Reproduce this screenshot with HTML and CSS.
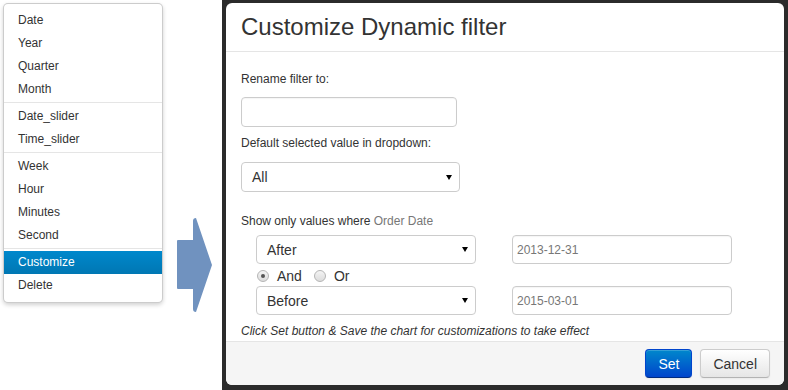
FILE: index.html
```html
<!DOCTYPE html>
<html>
<head>
<meta charset="utf-8">
<link rel="stylesheet" href="styles.css">
</head>
<body>
<div class="page">
  <div class="left">
    <ul class="menu">
      <li class="item">Date</li>
      <li class="item">Year</li>
      <li class="item">Quarter</li>
      <li class="item">Month</li>
      <li class="divider"></li>
      <li class="item">Date_slider</li>
      <li class="item">Time_slider</li>
      <li class="divider"></li>
      <li class="item">Week</li>
      <li class="item">Hour</li>
      <li class="item">Minutes</li>
      <li class="item">Second</li>
      <li class="divider"></li>
      <li class="item active">Customize</li>
      <li class="item">Delete</li>
    </ul>
    <svg class="arrow" width="36" height="95" viewBox="0 0 36 95">
      <path d="M1,22 L16,22 L16,3 Q16,0 19,0 L35,47 L19,94 Q16,94 16,91 L16,71 L1,71 Q0,71 0,70 L0,23 Q0,22 1,22 Z" fill="#7092bf"/>
    </svg>
  </div>
  <div class="backdrop">
    <div class="dialog">
      <div class="header">Customize Dynamic filter</div>
      <div class="body">
        <div class="label">Rename filter to:</div>
        <input class="text name" type="text" value="">
        <div class="label gap8">Default selected value in dropdown:</div>
        <div class="select wide"><span>All</span><i class="caret"></i></div>
        <div class="label gap21">Show only values where <span class="muted">Order Date</span></div>
        <div class="cond-row first">
          <div class="select cond"><span>After</span><i class="caret"></i></div>
          <input class="text date" type="text" value="2013-12-31">
        </div>
        <div class="radio-row">
          <span class="radio checked"></span><span class="rlabel">And</span>
          <span class="radio"></span><span class="rlabel">Or</span>
        </div>
        <div class="cond-row second">
          <div class="select cond"><span>Before</span><i class="caret"></i></div>
          <input class="text date" type="text" value="2015-03-01">
        </div>
        <div class="note">Click Set button &amp; Save the chart for customizations to take effect</div>
      </div>
      <div class="footer">
        <button class="btn primary">Set</button>
        <button class="btn">Cancel</button>
      </div>
    </div>
  </div>
</div>
</body>
</html>
```
FILE: styles.css
```css
html, body {
  margin: 0;
  padding: 0;
  background: #fff;
}
body {
  font-family: "Liberation Sans", Arial, sans-serif;
  color: #333;
}
.page {
  display: flex;
  width: 788px;
  height: 390px;
  overflow: hidden;
}
.left {
  width: 222px;
  flex: none;
  display: flex;
  align-items: flex-start;
}
.menu {
  list-style: none;
  margin: 3px 0 0 3px;
  padding: 5px 0;
  width: 160px;
  box-sizing: border-box;
  background: #fff;
  border: 1px solid rgba(0,0,0,0.2);
  border-radius: 5px;
  box-shadow: 0 2px 4px rgba(0,0,0,0.18);
}
.item {
  font-size: 12px;
  line-height: 17px;
  padding: 3px 14px;
  color: #333;
  white-space: nowrap;
}
.item.active {
  color: #fff;
  background: linear-gradient(#0088cc, #0077b3);
}
.divider {
  height: 1px;
  margin: 1px 0 2px;
  background: #e5e5e5;
}
.arrow {
  display: block;
  margin: 218px 0 0 14px;
}
.backdrop {
  flex: 1;
  background: #2b2b2b;
  padding: 3px 4px 5px 4px;
  box-sizing: border-box;
  height: 390px;
}
.dialog {
  height: 100%;
  background: #fff;
  border-radius: 6px;
  display: flex;
  flex-direction: column;
  overflow: hidden;
}
.header {
  font-size: 24px;
  line-height: 28px;
  padding: 10px 15px;
  border-bottom: 1px solid #e5e5e5;
  color: #333;
}
.body {
  flex: 1;
  padding: 19px 15px 0;
}
.label {
  font-size: 12px;
  line-height: 17px;
}
.gap8 { margin-top: 8px; }
.gap21 { margin-top: 21px; }
.muted { color: #777; }
.text {
  display: block;
  box-sizing: border-box;
  border: 1px solid #ccc;
  border-radius: 4px;
  background: #fff;
  font-family: "Liberation Sans", Arial, sans-serif;
  font-size: 12px;
  color: #777;
  padding: 0 4px;
  margin: 0;
  outline: none;
  box-shadow: inset 0 1px 1px rgba(0,0,0,0.04);
}
.text.name {
  margin-top: 9px;
  width: 216px;
  height: 30px;
}
.text.date {
  width: 220px;
  height: 29px;
}
.select {
  box-sizing: border-box;
  display: flex;
  align-items: center;
  justify-content: space-between;
  border: 1px solid #ccc;
  border-radius: 4px;
  background: #fff;
  font-size: 14px;
  color: #333;
  padding: 0 7px 0 10px;
}
.select.wide {
  margin-top: 10px;
  width: 219px;
  height: 30px;
}
.select.cond {
  width: 220px;
  height: 29px;
}
.caret {
  width: 0;
  height: 0;
  border-left: 3px solid transparent;
  border-right: 3px solid transparent;
  border-top: 5px solid #000;
}
.cond-row {
  display: flex;
  gap: 36px;
  padding-left: 15px;
}
.cond-row.first { margin-top: 5px; }
.cond-row.second { margin-top: 2px; }
.radio-row {
  display: flex;
  align-items: center;
  height: 16px;
  margin-top: 4px;
  padding-left: 16px;
  font-size: 14px;
}
.radio {
  width: 12px;
  height: 12px;
  box-sizing: border-box;
  border-radius: 50%;
  border: 1px solid #b5b5b5;
  background: linear-gradient(#f4f4f4, #dcdcdc);
  position: relative;
}
.radio.checked::after {
  content: "";
  position: absolute;
  left: 3px;
  top: 3px;
  width: 4px;
  height: 4px;
  border-radius: 50%;
  background: #555;
}
.rlabel {
  margin-left: 8px;
  margin-right: 12px;
}
.note {
  margin-top: 8px;
  font-size: 12px;
  line-height: 17px;
  font-style: italic;
  color: #333;
}
.footer {
  height: 44px;
  box-sizing: border-box;
  border-top: 1px solid #e5e5e5;
  background: #f5f5f5;
  display: flex;
  justify-content: flex-end;
  align-items: flex-start;
  gap: 8px;
  padding: 7px 14px 0;
}
.btn {
  font-family: "Liberation Sans", Arial, sans-serif;
  font-size: 14px;
  height: 29px;
  padding: 0 12px;
  border-radius: 4px;
  border: 1px solid #ccc;
  border-bottom-color: #b3b3b3;
  background: linear-gradient(#ffffff, #e6e6e6);
  color: #333;
  box-shadow: inset 0 1px 0 rgba(255,255,255,0.2), 0 1px 2px rgba(0,0,0,0.05);
}
.btn.primary {
  color: #fff;
  border-color: #0044cc #0044cc #002a80;
  background: linear-gradient(#0088cc, #0044cc);
}
```
